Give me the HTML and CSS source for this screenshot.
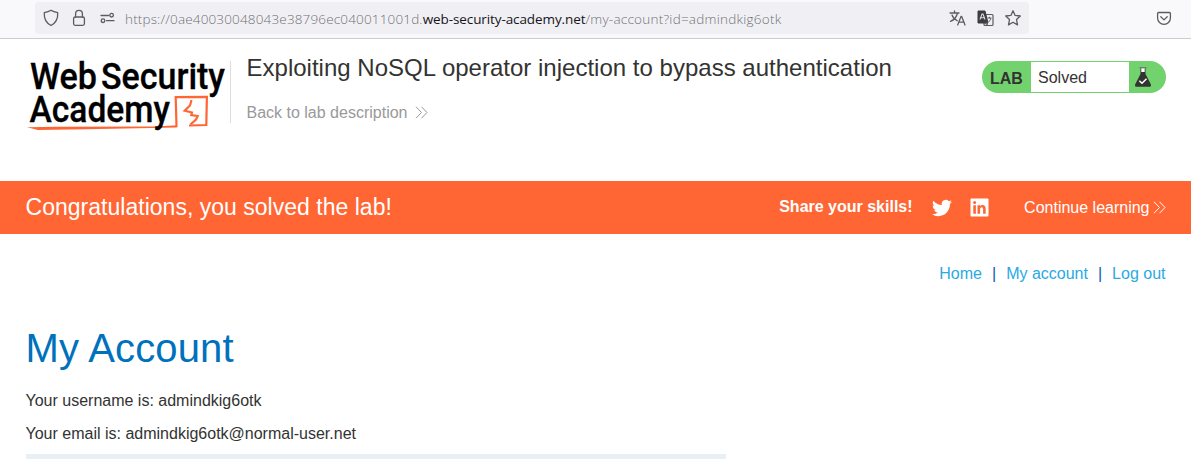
FILE: index.html
```html
<!DOCTYPE html>
<html lang="en">
<head>
<meta charset="utf-8">
<title>Exploiting NoSQL operator injection to bypass authentication</title>
<link rel="stylesheet" href="styles.css">
</head>
<body>
<div class="toolbar">
  <div class="urlbar">
    <svg class="ico shield" width="16" height="18" viewBox="0 0 16 18"><path d="M8 1.300C6 2.700 3.700 3.300 1.300 3.700C.9 9.500 2.800 13.700 8 16.500C13.200 13.700 15.100 9.500 14.700 3.700C12.300 3.300 10 2.700 8 1.300Z"/></svg>
    <svg class="ico lock" width="14" height="18" viewBox="0 0 14 18"><rect x="1.600" y="8" width="10.800" height="8.300" rx="1.500"/><path d="M3.600 8V4.800a3.400 3.400 0 0 1 6.800 0V8"/></svg>
    <svg class="ico perms" width="16" height="12" viewBox="0 0 16 12"><path d="M1 3.500H8.500M6.500 8.700H14"/><circle cx="11.600" cy="3.200" r="1.800"/><circle cx="3" cy="8.700" r="1.800"/></svg>
    <div class="url"><span class="url-a">https://0ae40030048043e38796ec040011001d.</span><span class="url-host">web-security-academy.net</span><span class="url-b">/my-account?id=admindkig6otk</span></div>
    <svg class="ico translate" width="17" height="16" viewBox="0 0 17 16"><path d="M1 3H10M5.500 1V3M3 5C4 8 6 9.500 8.300 10.800M8.500 3C7.500 7.500 5 10 1.500 11.300M8.700 15L12 6.500H12.700L16 15M9.800 12.200H14.900"/></svg>
    <svg class="translate-page" width="17" height="17" viewBox="0 0 17 17"><rect x="7" y="4.500" width="9" height="11" rx="1" fill="#efeff3" stroke="#5b5b60" stroke-width="1.200"/><path d="M1 1H8L11 13H1Z" fill="#3c3c41" stroke="#3c3c41"/><path d="M3 9.500L5 4H6L8 9.500M3.800 7.800H7.200" fill="none" stroke="#dedee2" stroke-width="1.100"/><path d="M10.500 8H14.300M12.400 6.800V8M14 8C13.500 10 12.500 11 11.500 12M8 13L10 15.500L10.700 13Z" fill="none" stroke="#5b5b60"/></svg>
    <svg class="ico star" width="18" height="18" viewBox="0 0 18 18"><path d="M9 1.800L11.100 6.400L16.300 7L12.500 10.500L13.500 15.900L9 13.300L4.500 15.900L5.500 10.500L1.700 7L6.900 6.400Z"/></svg>
  </div>
  <svg class="ico pocket" width="16" height="15" viewBox="0 0 16 15"><path d="M2.600 1.500H13.400Q14.400 1.500 14.400 2.500V7A6.400 6.400 0 0 1 1.600 7V2.500Q1.600 1.500 2.600 1.500ZM4.800 5.800L8 8.900L11.200 5.800"/></svg>
</div>
<header class="header">
  <svg class="logo" width="204" height="76" viewBox="0 0 204 76">
    <path class="logo-under" d="M1 70.300L30 69.800L130 69.600L151 68.300V70.600L60 72.300L12 73Z"/>
    <g class="logo-line">
      <path d="M150.500 70L149.700 40.200L180.900 39.800L180.300 68L163 68.500"/>
      <path d="M165.500 43L164 48.500L158.700 53.700L166 55.500L165.300 58L171.700 59L170 62.500L164.500 67.500"/>
    </g>
    <g class="logo-text">
      <text x="4" y="32" textLength="67" lengthAdjust="spacingAndGlyphs">Web</text>
      <text x="75" y="32" textLength="124" lengthAdjust="spacingAndGlyphs">Security</text>
      <text x="3.500" y="65" textLength="140.500" lengthAdjust="spacingAndGlyphs">Academy</text>
    </g>
  </svg>
  <div class="titles">
    <h2 class="lab-title">Exploiting NoSQL operator injection to bypass authentication</h2>
    <a class="back">Back to lab description<svg class="chev" width="13" height="13" viewBox="0 0 13 13"><path d="M1 .8L6.500 6.500L1 12.200M6.500 .8L12 6.500L6.500 12.200"/></svg></a>
  </div>
  <div class="status">
    <span class="status-lab">LAB</span>
    <span class="status-text">Solved</span>
    <svg class="flask" width="18" height="22" viewBox="0 0 18 22"><path d="M5.500 1H12.500V2.500H5.500Z" fill="#777"/><path d="M7 2.500H11V6H7Z" fill="#fff"/><path d="M6.500 2.500V8L1.200 18.200Q.4 20.700 2.500 20.700H15.500Q17.600 20.700 16.800 18.200L11.500 8V2.500H10.700V6H7.300V2.500Z" fill="#333332"/><path d="M5.300 14.800L8 17.300L12.500 12.800" fill="none" stroke="#fff" stroke-width="1.500"/></svg>
  </div>
</header>
<section class="banner">
  <h4 class="congrats">Congratulations, you solved the lab!</h4>
  <span class="share">Share your skills!</span>
  <svg class="twitter" width="20" height="20" viewBox="0 0 24 24"><path fill="#fff" d="M23.950 4.570a10 10 0 0 1-2.820.77 4.960 4.960 0 0 0 2.160-2.720c-.95.550-2 .95-3.130 1.180a4.920 4.920 0 0 0-8.380 4.480C7.690 8.090 4.070 6.130 1.640 3.160a4.820 4.820 0 0 0-.67 2.480c0 1.710.87 3.210 2.190 4.100a4.900 4.900 0 0 1-2.230-.62v.06a4.920 4.920 0 0 0 3.950 4.830 5 5 0 0 1-2.210.08 4.940 4.940 0 0 0 4.600 3.420A9.870 9.870 0 0 1 0 19.540a13.990 13.990 0 0 0 7.550 2.210c9.050 0 14-7.500 14-13.980l-.02-.64a9.940 9.940 0 0 0 2.420-2.560Z"/></svg>
  <svg class="linkedin" width="19" height="19" viewBox="0 0 19 19"><rect x=".5" y=".5" width="18" height="18" rx="1" fill="#fff"/><g fill="#f63"><circle cx="4.600" cy="4.500" r="1.500"/><path d="M3.300 7.200H5.900V15.800H3.300ZM7.500 7.200H10V8.400C11.300 6.300 15.700 6.400 15.700 10.700V15.800H13.100V11.200C13.100 8.400 10.100 8.600 10.100 11.200V15.800H7.500Z"/></g></svg>
  <a class="continue">Continue learning<svg class="chev" width="13" height="13" viewBox="0 0 13 13"><path d="M1 .8L6.500 6.500L1 12.200M6.500 .8L12 6.500L6.500 12.200"/></svg></a>
</section>
<nav class="nav"><a>Home</a><span>|</span><a>My account</a><span>|</span><a>Log out</a></nav>
<main class="account">
  <h1>My Account</h1>
  <p>Your username is: admindkig6otk</p>
  <p>Your email is: admindkig6otk@normal-user.net</p>
  <div class="form"></div>
</main>
</body>
</html>
```

FILE: styles.css
```css
* { box-sizing: border-box; }
body {
  margin: 0;
  height: 459px;
  overflow: hidden;
  background: #fff;
  color: #333332;
  font: 16px/20px "Liberation Sans", Arial, sans-serif;
}
h1, h2, h4, p { margin: 0; font-weight: 400; }
svg { display: block; flex: none; }
.toolbar {
  display: flex;
  align-items: flex-start;
  height: 39px;
  background: #f9f9fb;
  border-bottom: 1px solid #ccc;
}
.urlbar {
  display: flex;
  align-items: center;
  width: 994px;
  height: 32px;
  margin: 2px 0 0 35px;
  padding-left: 8px;
  background: #f0f0f4;
  border-radius: 4px;
}
.ico { fill: none; stroke: #5b5b60; stroke-width: 1.300; stroke-linejoin: round; stroke-linecap: round; }
.lock { margin-left: 13px; }
.perms { margin-left: 14px; }
.url {
  width: 824px;
  margin: 2px 0 0 9px;
  white-space: nowrap;
  font: 13.500px/20px "Open Sans", "Noto Sans", sans-serif;
  color: #707075;
}
.url-a, .url-b { font-weight: 300; }
.url-a { letter-spacing: .16px; }
.url-host { color: #15141a; letter-spacing: -.1px; }
.url-b { letter-spacing: .24px; }
.translate-page { margin-left: 11px; }
.star { margin-left: 10px; }
.pocket { margin: 11px 0 0 127px; }
.header { display: flex; height: 142px; padding: 18px 25px 0 26px; }
.logo { overflow: visible; }
.logo-text { font: 500 37.500px Roboto, sans-serif; fill: #000; stroke: #000; stroke-width: .3; }
.logo-line { fill: none; stroke: #f63; stroke-width: 2.200; }
.logo-under { fill: #f63; }
.titles { height: 62px; margin-top: 4px; padding-left: 15.500px; border-left: 1px solid #ddd; white-space: nowrap; }
.lab-title { font-size: 24px; line-height: 28px; margin-top: -7px; letter-spacing: .01px; }
.back { display: flex; align-items: center; margin-top: 21px; color: #999; }
.chev { fill: none; stroke: currentColor; stroke-width: 1; }
.back .chev { margin: -1px 0 0 7.500px; }
.status {
  display: flex;
  width: 184px;
  height: 32px;
  margin: 4px 0 0 auto;
  padding: 1px 0;
  background: #72d26e;
  border-radius: 16px;
  line-height: 32px;
}
.status-lab { width: 49px; padding: 1px 0 0 8px; font-weight: 700; }
.status-text { width: 98px; padding-left: 7px; background: #fff; }
.flask { margin: 4px 0 0 5px; }
.banner {
  display: flex;
  align-items: center;
  height: 53px;
  padding: 0 25px;
  color: #fff;
  background: #f63;
}
.congrats { margin: -2px 0 0 .5px; font-size: 23px; letter-spacing: .02px; }
.share { margin: -2px 0 0 auto; font-weight: 700; }
.twitter { margin-left: 19px; }
.linkedin { margin-left: 18.500px; }
.continue { display: flex; align-items: center; margin-left: 35px; }
.continue .chev { margin: -1px 0 0 3.500px; }
.nav { display: flex; justify-content: flex-end; padding: 30px 25.500px 0; color: #0f5aa8; }
.nav a { color: #29a9e5; }
.nav span { margin: 0 10px; }
.account { padding: 40px 25px 0 25.500px; }
.account h1 { font-size: 40px; line-height: 48px; color: #0071bc; letter-spacing: .15px; }
.account p { margin-top: 13px; }
.account h1 + p { margin-top: 19px; }
.form { width: 700px; height: 16px; margin-top: 10px; background: #eaeff3; }
```
